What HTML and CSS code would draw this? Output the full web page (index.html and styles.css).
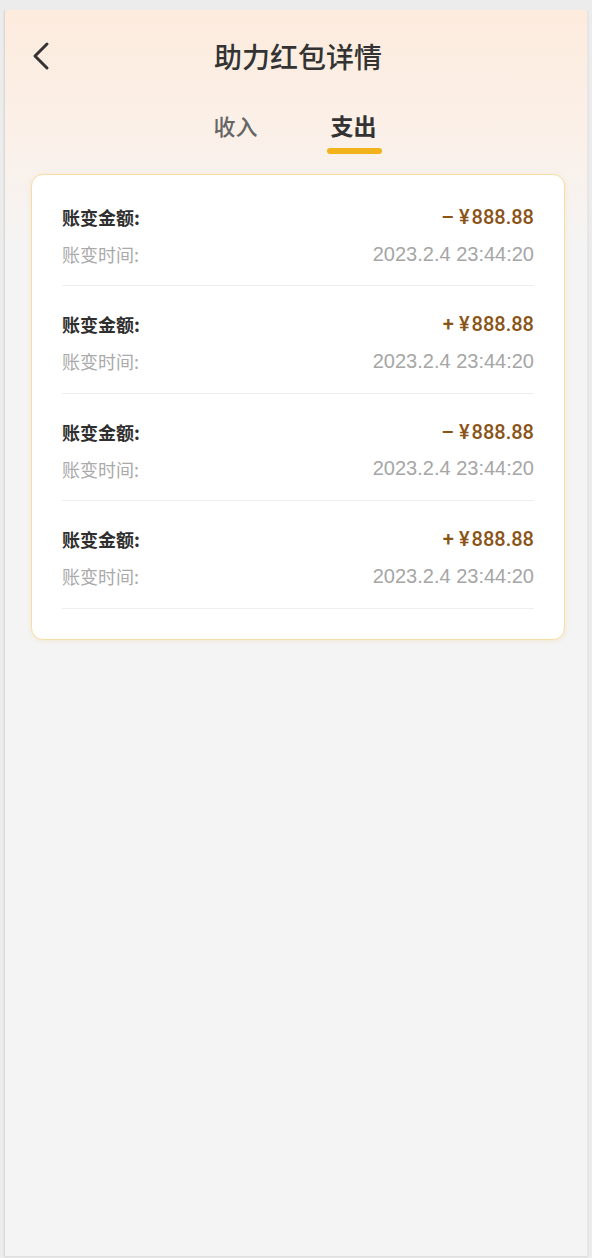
FILE: index.html
```html
<!DOCTYPE html>
<html lang="zh">
<head>
<meta charset="utf-8">
<link rel="stylesheet" href="styles.css">
</head>
<body>
<div class="screen">
  <header class="topbar">
    <div class="nav">
      <span class="back">
        <svg width="20" height="30" viewBox="0 0 20 30"><path d="M16 3 L4 15 L16 27" fill="none" stroke="#333" stroke-width="3" stroke-linecap="round" stroke-linejoin="round"/></svg>
      </span>
      <h1 class="title">助力红包详情</h1>
    </div>
    <div class="tabs">
      <div class="tab">收入</div>
      <div class="tab active">支出</div>
    </div>
  </header>
  <main class="card">
    <div class="row">
      <div class="line"><span class="label">账变金额:</span><span class="amount"><span class="sign">–</span><span class="yen">¥</span>888.88</span></div>
      <div class="line"><span class="sub">账变时间:</span><span class="time">2023.2.4 23:44:20</span></div>
    </div>
    <div class="row">
      <div class="line"><span class="label">账变金额:</span><span class="amount"><span class="sign">+</span><span class="yen">¥</span>888.88</span></div>
      <div class="line"><span class="sub">账变时间:</span><span class="time">2023.2.4 23:44:20</span></div>
    </div>
    <div class="row">
      <div class="line"><span class="label">账变金额:</span><span class="amount"><span class="sign">–</span><span class="yen">¥</span>888.88</span></div>
      <div class="line"><span class="sub">账变时间:</span><span class="time">2023.2.4 23:44:20</span></div>
    </div>
    <div class="row">
      <div class="line"><span class="label">账变金额:</span><span class="amount"><span class="sign">+</span><span class="yen">¥</span>888.88</span></div>
      <div class="line"><span class="sub">账变时间:</span><span class="time">2023.2.4 23:44:20</span></div>
    </div>
  </main>
</div>
</body>
</html>
```
FILE: styles.css
```css
html, body {
  margin: 0;
  padding: 0;
}
body {
  background: #ececec;
  font-family: "Noto Sans CJK SC", "Noto Sans", sans-serif;
  padding: 10px 4px 2px 4px;
  box-sizing: border-box;
  height: 1258px;
}
.screen {
  height: 1246px;
  background: linear-gradient(180deg, #fdebdd 0px, #fbf0e8 120px, #f4f4f4 240px, #f4f4f4 100%);
  border-left: 1px solid #d8d8d8;
  border-right: 1px solid #e6e6e6;
  box-shadow: 0 1px 2px rgba(0,0,0,0.08);
  box-sizing: border-box;
  padding: 0 22px 0 26px;
}
.topbar {
  display: flex;
  flex-direction: column;
}
.nav {
  position: relative;
  height: 72px;
  box-sizing: border-box;
  display: flex;
  align-items: center;
  justify-content: center;
  padding-top: 20px;
}
.back {
  position: absolute;
  left: 0;
  top: 31px;
  display: block;
  width: 20px;
  height: 30px;
}
.title {
  margin: 0;
  font-size: 28px;
  font-weight: 500;
  color: #333;
  line-height: 40px;
}
.tabs {
  display: flex;
  justify-content: center;
  gap: 73px;
  height: 92px;
  padding: 28px 6px 0 0;
  box-sizing: border-box;
}
.tab {
  position: relative;
  font-size: 22px;
  line-height: 30px;
  height: 30px;
  color: #666;
  font-weight: 500;
}
.tab.active {
  font-size: 23px;
  color: #333;
  font-weight: 700;
}
.tab.active::after {
  content: "";
  position: absolute;
  left: -4px;
  right: -5px;
  top: 38px;
  height: 6px;
  border-radius: 3px;
  background: #f2b21c;
}
.card {
  background: #fff;
  border: 1px solid #f6dea6;
  border-radius: 12px;
  box-shadow: 0 1px 4px rgba(240, 200, 120, 0.25);
  padding: 4px 30px 30px 30px;
  display: flex;
  flex-direction: column;
}
.row {
  border-bottom: 1px solid #eeeeee;
  padding: 25px 0 18.4px;
  display: flex;
  flex-direction: column;
  gap: 11px;
}
.line {
  display: flex;
  justify-content: space-between;
  align-items: center;
  height: 26px;
}
.label {
  font-size: 18px;
  font-weight: 700;
  color: #2f2f2f;
}
.sub {
  font-size: 18px;
  color: #aaaaaa;
}
.amount {
  font-size: 20px;
  font-weight: 500;
  color: #8a5417;
  font-family: Roboto, "Noto Sans CJK SC", sans-serif;
}
.sign {
  margin-right: 5px;
}
.yen {
  margin-right: 2px;
}
.time {
  font-size: 20px;
  color: #a6a6a6;
  font-family: "Liberation Sans", sans-serif;
}
```
